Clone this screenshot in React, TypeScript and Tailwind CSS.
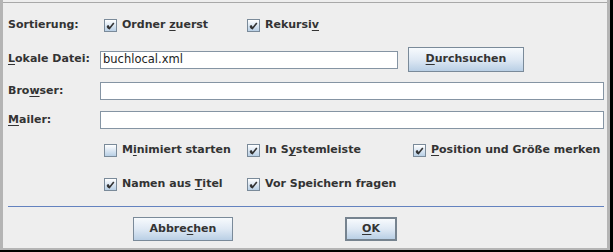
import React from "react";

const font = { fontFamily: '"DejaVu Sans", "Liberation Sans", sans-serif' };

function U({ children }: { children: React.ReactNode }) {
  return <span className="underline underline-offset-[2px] decoration-1">{children}</span>;
}

function Check({ checked }: { checked: boolean }) {
  return (
    <span className="relative inline-block h-[13px] w-[13px] shrink-0 border border-[#7a8a99] bg-gradient-to-b from-[#ffffff] to-[#b8cfe5]">
      {checked && (
        <svg className="absolute left-[1px] top-[1px]" width="9" height="9" viewBox="0 0 9 9">
          <path d="M1.5 4.5 L3.5 7.5 L7.8 2" fill="none" stroke="#333333" strokeWidth="1.6" />
          <path d="M1.5 5 L3.2 7.5" fill="none" stroke="#333333" strokeWidth="2.4" />
        </svg>
      )}
    </span>
  );
}

function CB({ checked, children, w }: { checked: boolean; children: React.ReactNode; w?: string }) {
  return (
    <div className={`flex h-[13px] items-center gap-[5px] ${w ?? ""}`}>
      <Check checked={checked} />
      <span className="whitespace-nowrap">{children}</span>
    </div>
  );
}

function Label({ children, w }: { children: React.ReactNode; w?: string }) {
  return <div className={`${w ?? "w-[92px]"} shrink-0 whitespace-nowrap`}>{children}</div>;
}

function Btn({ children, w, def }: { children: React.ReactNode; w: string; def?: boolean }) {
  return (
    <div
      className={`flex h-full items-center justify-center bg-gradient-to-b from-[#f7fafd] via-[#dfe9f4] to-[#b9cfe5] ${w} ${
        def ? "border-2 border-[#76838f]" : "border border-[#7a8a99]"
      }`}
    >
      {children}
    </div>
  );
}

export default function App() {
  return (
    <div className="h-[252px] w-[613px] bg-[#000000]" style={font}>
      <div className="h-[250px] w-[610px] bg-[#b4b4b4]">
        <div className="ml-[3px] h-[248px] w-[604px] bg-[#eeeeee] pt-[2px]">
          <div className="h-px w-full bg-[#a8a8a8]" />
          <div className="flex flex-col pl-[5px] text-[11px] font-bold text-[#333333]">
            {/* Row 1 */}
            <div className="mt-[16px] flex h-[13px] items-center">
              <Label w="w-[96px]">Sortierung:</Label>
              <CB checked w="w-[143px]">
                Ordner <U>z</U>uerst
              </CB>
              <CB checked>
                Rekursi<U>v</U>
              </CB>
            </div>
            {/* Row 2 */}
            <div className="mt-[15px] flex h-[25px] items-center">
              <Label>
                <U>L</U>okale Datei:
              </Label>
              <div className="flex h-[18px] w-[298px] items-center border border-[#8594a3] bg-white pl-[2px] text-[11.5px] font-normal text-[#222]">
                buchlocal.xml
              </div>
              <div className="ml-[10px] h-[25px]">
                <Btn w="w-[116px]">
                  <U>D</U>urchsuchen
                </Btn>
              </div>
            </div>
            {/* Row 3 */}
            <div className="mt-[10px] flex h-[18px] items-center">
              <Label>
                Bro<U>w</U>ser:
              </Label>
              <div className="h-[18px] w-[504px] border border-[#8594a3] bg-white" />
            </div>
            {/* Row 4 */}
            <div className="mt-[11px] flex h-[18px] items-center">
              <Label>
                <U>M</U>ailer:
              </Label>
              <div className="h-[18px] w-[504px] border border-[#8594a3] bg-white" />
            </div>
            {/* Row 5 */}
            <div className="mt-[15px] flex h-[13px] items-center">
              <div className="w-[96px] shrink-0" />
              <CB checked={false} w="w-[143px]">
                M<U>i</U>nimiert starten
              </CB>
              <CB checked w="w-[166px]">
                In S<U>y</U>stemleiste
              </CB>
              <CB checked>
                <U>P</U>osition und Größe merken
              </CB>
            </div>
            {/* Row 6 */}
            <div className="mt-[21px] flex h-[13px] items-center">
              <div className="w-[96px] shrink-0" />
              <CB checked w="w-[143px]">
                Namen aus <U>T</U>itel
              </CB>
              <CB checked>Vor Speichern fragen</CB>
            </div>
            {/* Separator */}
            <div className="mt-[15px] h-px w-[596px] bg-[#6382bf]" />
            {/* Buttons */}
            <div className="mt-[10px] flex h-[24px] items-center font-bold">
              <div className="w-[125px] shrink-0" />
              <Btn w="w-[100px]">
                Abbre<U>c</U>hen
              </Btn>
              <div className="w-[112px] shrink-0" />
              <Btn w="w-[52px]" def>
                <U>O</U>K
              </Btn>
            </div>
          </div>
        </div>
      </div>
    </div>
  );
}
